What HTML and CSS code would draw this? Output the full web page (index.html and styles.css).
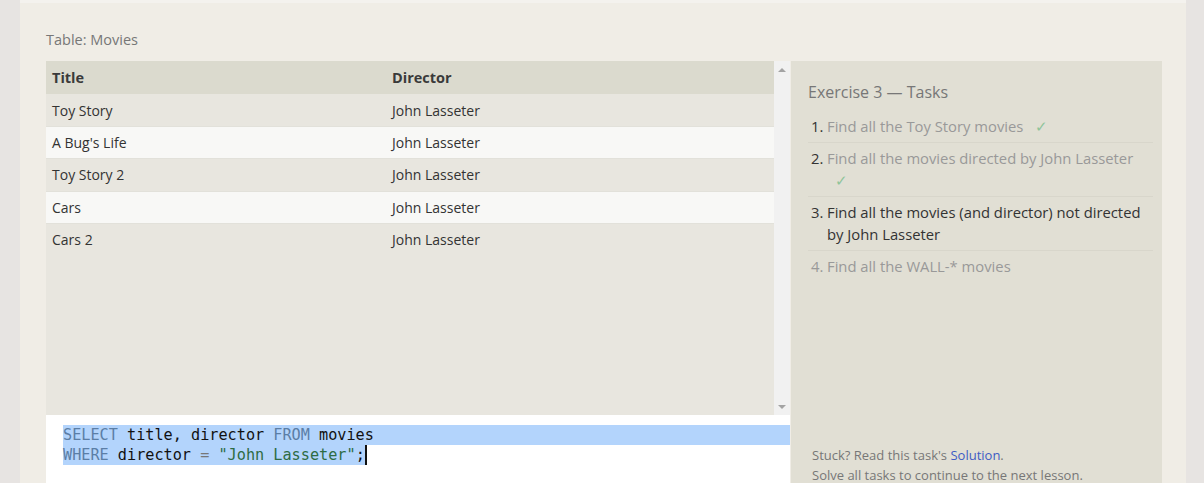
FILE: index.html
```html
<!DOCTYPE html>
<html>
<head>
<meta charset="utf-8">
<link rel="stylesheet" href="styles.css">
</head>
<body>
<div class="card">
  <div class="table-label">Table: Movies</div>
  <div class="main">
    <div class="left">
      <div class="viewport">
        <div class="table">
          <div class="row head"><div class="c1">Title</div><div class="c2">Director</div></div>
          <div class="row odd"><div class="c1">Toy Story</div><div class="c2">John Lasseter</div></div>
          <div class="row even"><div class="c1">A Bug's Life</div><div class="c2">John Lasseter</div></div>
          <div class="row odd"><div class="c1">Toy Story 2</div><div class="c2">John Lasseter</div></div>
          <div class="row even"><div class="c1">Cars</div><div class="c2">John Lasseter</div></div>
          <div class="row odd"><div class="c1">Cars 2</div><div class="c2">John Lasseter</div></div>
        </div>
        <div class="scrollbar">
          <span class="arrow up"></span>
          <span class="arrow down"></span>
        </div>
      </div>
      <div class="editor">
        <div class="line sel-full"><span class="kw">SELECT</span> title, director <span class="kw">FROM</span> movies</div>
        <div class="line"><span class="sel"><span class="kw">WHERE</span> director <span class="op">=</span> <span class="str">"John Lasseter"</span>;</span><span class="cursor"></span></div>
      </div>
    </div>
    <div class="panel">
      <div class="panel-title">Exercise 3 — Tasks</div>
      <ol class="tasks">
        <li class="done"><span class="num">1.</span><span class="txt">Find all the Toy Story movies <span class="check">✓</span></span></li>
        <li class="done"><span class="num">2.</span><span class="txt">Find all the movies directed by John Lasseter <span class="check">✓</span></span></li>
        <li class="current"><span class="num">3.</span><span class="txt">Find all the movies (and director) not directed by John Lasseter</span></li>
        <li class="todo"><span class="num">4.</span><span class="txt">Find all the WALL-* movies</span></li>
      </ol>
      <div class="footer">
        <div>Stuck? Read this task's <a class="link">Solution</a>.</div>
        <div>Solve all tasks to continue to the next lesson.</div>
      </div>
    </div>
  </div>
</div>
</body>
</html>
```

FILE: styles.css
```css
html, body {
  margin: 0;
  padding: 0;
  height: 100%;
  overflow: hidden;
}
body {
  background: #e7e4e2;
  font-family: "Open Sans", "Noto Sans", sans-serif;
  color: #333;
}
.card {
  margin-left: 20px;
  width: 1166px;
  height: 483px;
  background: #f0ede6;
  box-sizing: border-box;
  padding: 30px 0 0 26px;
  border-top: 3px solid #f4f2ee;
  overflow: hidden;
}
.table-label {
  font-size: 14.5px;
  line-height: 20px;
  color: #777;
  margin-top: -3px;
  margin-bottom: 11px;
}
.main {
  display: flex;
  align-items: flex-start;
}
.left {
  width: 744px;
  display: flex;
  flex-direction: column;
}
.viewport {
  height: 354px;
  display: flex;
  background: #e8e6df;
}
.table {
  flex: 1;
}
.row {
  display: flex;
  height: 32.4px;
  box-sizing: border-box;
  align-items: center;
  font-size: 14px;
  color: #333;
}
.row.head {
  height: 33px;
  background: #dbdace;
  font-weight: bold;
  font-size: 14.5px;
  color: #3a3a3a;
}
.row.odd { background: #e8e6df; }
.row.even {
  background: #f8f8f6;
  border-top: 1px solid #e2e1da;
  border-bottom: 1px solid #e2e1da;
}
.c1 {
  width: 334px;
  padding-left: 6px;
}
.c2 {
  padding-left: 6px;
}
.scrollbar {
  width: 16px;
  background: #f1f1f1;
  display: flex;
  flex-direction: column;
  justify-content: space-between;
  align-items: center;
  padding: 7px 0 6px;
  box-sizing: border-box;
}
.arrow {
  width: 0;
  height: 0;
  border-left: 4px solid transparent;
  border-right: 4px solid transparent;
}
.arrow.up { border-bottom: 4px solid #a3a3a3; }
.arrow.down { border-top: 4px solid #a3a3a3; }
.editor {
  background: #fff;
  height: 68px;
  box-sizing: border-box;
  padding: 10px 0 0 17px;
  font-family: "DejaVu Sans Mono", "Liberation Mono", monospace;
  font-size: 15.2px;
  color: #111;
}
.line {
  height: 20px;
  line-height: 20px;
  white-space: pre;
  display: flex;
}
.sel-full { background: #b3d4fc; }
.sel { background: #b3d4fc; }
.kw { color: #5b7ea6; }
.op { color: #777; }
.str { color: #2e6b44; }
.cursor {
  width: 2px;
  height: 20px;
  background: #111;
}
.panel {
  width: 371px;
  margin-left: 1px;
  height: 422px;
  box-sizing: border-box;
  background: #e1dfd4;
  padding: 20px 9px 0 17px;
  display: flex;
  flex-direction: column;
}
.panel-title {
  font-size: 16px;
  line-height: 22px;
  color: #777;
  margin-bottom: 8px;
}
.tasks {
  list-style: none;
  margin: 0;
  padding: 0;
  font-size: 14.8px;
  line-height: 22.5px;
}
.tasks li {
  display: flex;
  padding: 4px 0 4px 3px;
  border-bottom: 1px solid #d8d6cb;
}
.tasks li:last-child { border-bottom: none; }
.num {
  width: 16px;
  flex: none;
}
.txt { flex: 1; }
.done .num { color: #333; }
.done .txt { color: #999; }
.current { color: #333; }
.todo { color: #999; }
.check {
  color: #8fc49a;
  margin-left: 8px;
}
.footer {
  margin-top: auto;
  margin-bottom: -2px;
  font-size: 13px;
  line-height: 20px;
  color: #777;
  padding-left: 4px;
}
.link { color: #3e5bc4; }
```
